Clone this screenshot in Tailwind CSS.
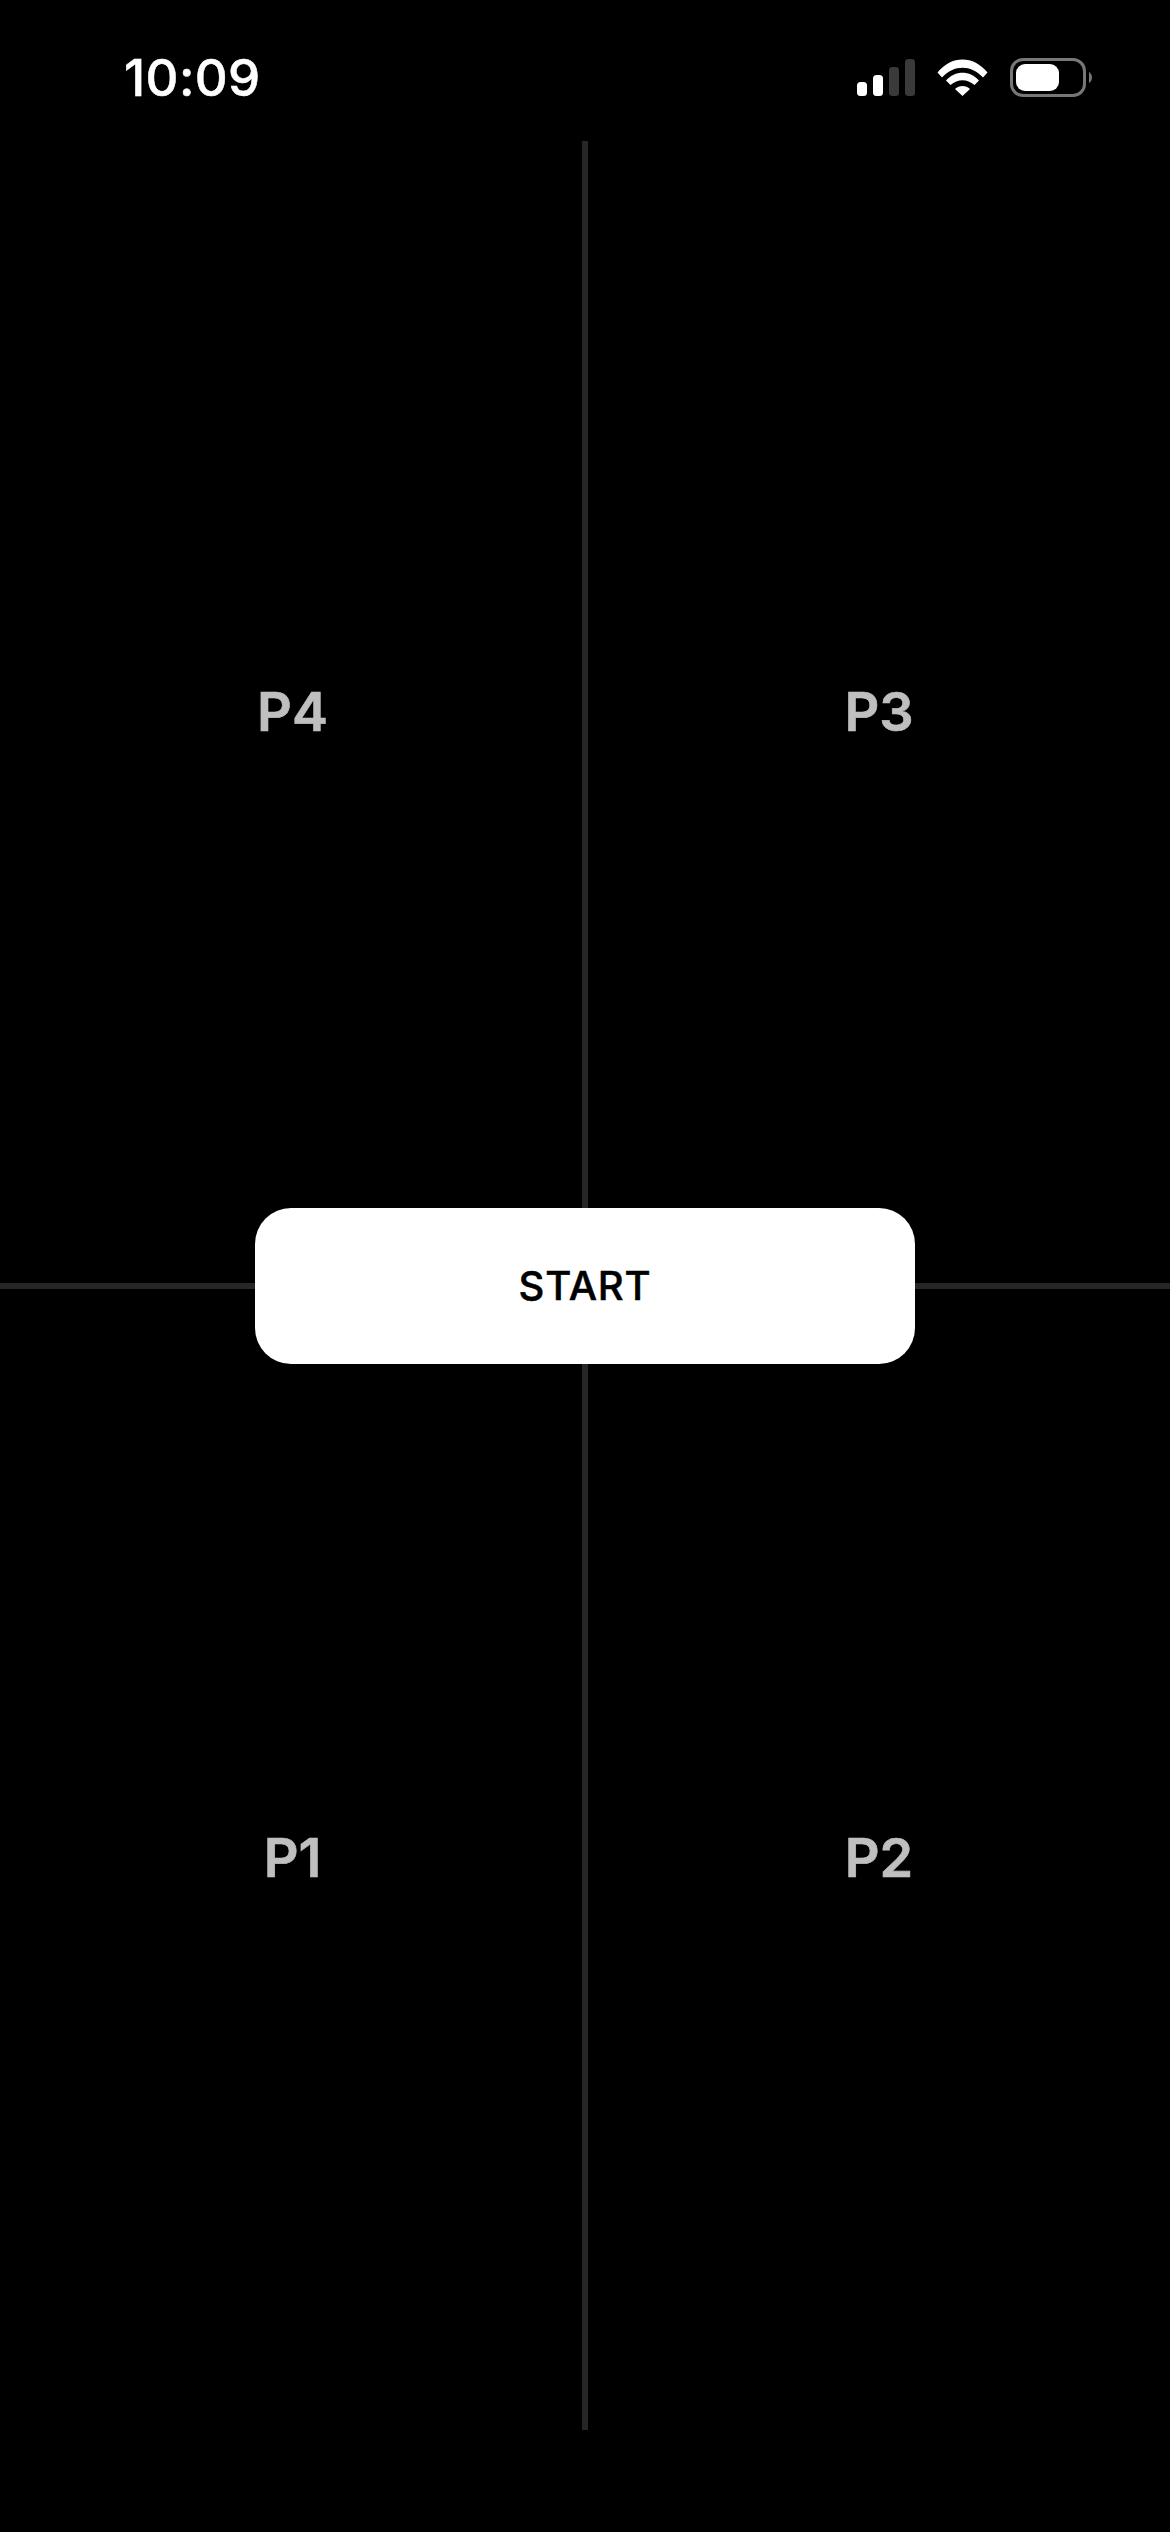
<!DOCTYPE html>
<html lang="en">
<head>
    <meta charset="UTF-8">
    <meta name="viewport" content="width=device-width, initial-scale=1.0">
    <title>Start</title>
    <script src="https://cdn.jsdelivr.net/npm/@tailwindcss/browser@4"></script>
</head>
<body class="bg-black font-['Inter',sans-serif] w-[1170px] h-[2532px] overflow-hidden">
    <!-- status bar -->
    <div class="flex justify-between items-start h-[141px] pl-[124px] pr-[78px] pt-[58px]">
        <span class="text-white text-[51px] leading-[39px] font-medium tracking-[0.4px] [-webkit-text-stroke:0.5px_#fff]">10:09</span>
        <div class="flex items-start gap-[22px] pt-[1px]">
            <svg width="58" height="37" viewBox="0 0 58 37">
                <rect x="0" y="23" width="10" height="14" rx="3.5" fill="#fff"/>
                <rect x="16" y="16" width="10" height="21" rx="3.5" fill="#fff"/>
                <rect x="32" y="8" width="10" height="29" rx="3.5" fill="#3a3a3a"/>
                <rect x="48" y="0" width="10" height="37" rx="3.5" fill="#3a3a3a"/>
            </svg>
            <svg width="51" height="37" viewBox="0 0 51 37" fill="#fff">
                <path d="M0.5 13.5C14 -4 37 -4 50.5 13.5L46 18.5C34 5.5 17 5.5 5 18.5Z"/>
                <path d="M9 21.5C18 11 33 11 42 21.5L37.5 26C30 19.5 21 19.5 13.5 26Z"/>
                <path d="M18 30C22 26 29 26 33 30L25.5 37Z"/>
            </svg>
            <svg class="-mt-[1px]" width="82" height="39" viewBox="0 0 82 39">
                <rect x="1.5" y="1.5" width="73" height="36" rx="11.5" fill="none" stroke="#777" stroke-width="3"/>
                <rect x="6" y="6" width="43" height="27" rx="9" fill="#fff"/>
                <path d="M79 14C81 15 82 17.5 82 19.5C82 21.5 81 24 79 25Z" fill="#777"/>
            </svg>
        </div>
    </div>

    <!-- player grid -->
    <div class="relative grid grid-cols-2 grid-rows-2 h-[2289px] text-[#bfbfbf] text-[54px] font-semibold [-webkit-text-stroke:0.6px_#bfbfbf]">
        <div class="flex items-center justify-center pl-[3px] border-r-[3px] border-b-[3px] border-[#262626]">P4</div>
        <div class="flex items-center justify-center border-l-[3px] border-b-[3px] border-[#262626]">P3</div>
        <div class="flex items-center justify-center pl-[3px] pb-[3px] border-r-[3px] border-t-[3px] border-[#262626]">P1</div>
        <div class="flex items-center justify-center pb-[3px] border-l-[3px] border-t-[3px] border-[#262626]">P2</div>
        <button class="absolute left-[255px] top-[1067px] w-[660px] h-[156px] bg-white rounded-[36px] text-black text-[40px] font-medium tracking-[0.8px] [-webkit-text-stroke:0.5px_#000]">START</button>
    </div>
</body>
</html>
